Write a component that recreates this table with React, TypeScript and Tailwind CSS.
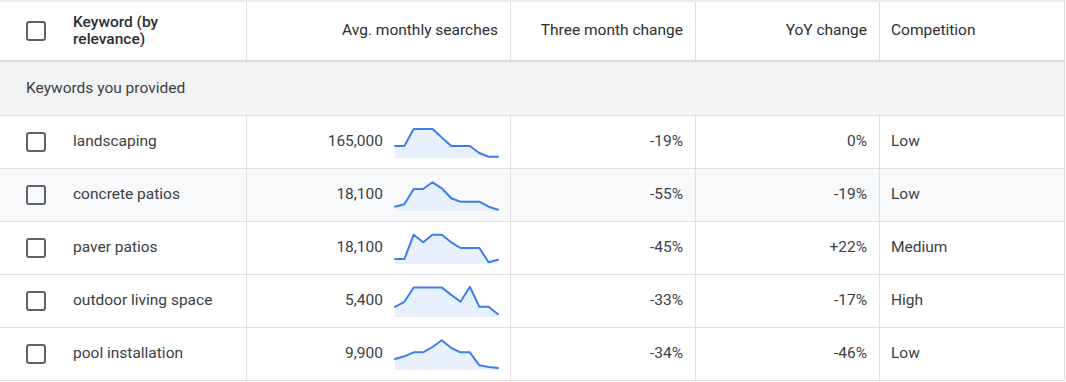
import React from 'react';

interface KeywordRow {
  keyword: string;
  searches: string;
  threeMonth: string;
  yoy: string;
  competition: string;
  trend: number[];
  shaded?: boolean;
}

const rows: KeywordRow[] = [
  { keyword: 'landscaping', searches: '165,000', threeMonth: '-19%', yoy: '0%', competition: 'Low', trend: [30, 30, 13, 13, 13, 21.5, 30, 30, 30, 37, 40.7, 40.7] },
  { keyword: 'concrete patios', searches: '18,100', threeMonth: '-55%', yoy: '-19%', competition: 'Low', trend: [37.7, 35.3, 20, 20, 13.3, 19.3, 29.3, 32.7, 32.7, 32.7, 37.7, 40.7], shaded: true },
  { keyword: 'paver patios', searches: '18,100', threeMonth: '-45%', yoy: '+22%', competition: 'Medium', trend: [37, 37, 12.7, 20.3, 12.7, 12.7, 20.3, 26, 26, 26, 40.3, 37.7] },
  { keyword: 'outdoor living space', searches: '5,400', threeMonth: '-33%', yoy: '-17%', competition: 'High', trend: [31.8, 26.8, 12.5, 12.5, 12.5, 12.5, 19.9, 26.8, 11.8, 31.8, 31.8, 39.2] },
  { keyword: 'pool installation', searches: '9,900', threeMonth: '-34%', yoy: '-46%', competition: 'Low', trend: [31, 28.3, 24.3, 24.3, 19, 12.3, 20, 24.3, 24.3, 37.3, 39, 40] },
];

const Checkbox = () => (
  <div className="w-5 h-5 shrink-0 rounded-[3px] border-2 border-[#5f6368]" />
);

const Sparkline = ({ values }: { values: number[] }) => {
  const step = 103 / (values.length - 1);
  const pts = values.map((v, i) => `${(1 + i * step).toFixed(1)},${v}`);
  const line = pts.join(' ');
  const area = `1,42 ${line} 104,42`;
  return (
    <svg width="106" height="53" viewBox="0 0 106 53" className="ml-[11px] shrink-0">
      <polygon points={area} fill="#e8f0fe" />
      <polyline points={line} fill="none" stroke="#3f7ee8" strokeWidth="2" strokeLinejoin="round" strokeLinecap="round" />
    </svg>
  );
};

export default function App() {
  return (
    <div className="w-[1066px] h-[382px] overflow-hidden bg-white text-[15.5px] text-[#3c4043]" style={{ fontFamily: 'Roboto, "Liberation Sans", sans-serif' }}>
      <div className="w-[1065px] border-r border-[#e0e0e0]">
        {/* Header */}
        <div className="flex h-[62px] border-t-2 border-b-2 border-t-[#ececec] border-b-[#dcdcdc] text-[#2d2f31]">
          <div className="w-[247px] flex items-center pl-[26px] gap-[27px] border-r border-[#e0e0e0]">
            <Checkbox />
            <div className="leading-[17px] w-[100px] font-medium">Keyword (by relevance)</div>
          </div>
          <div className="w-[264px] flex items-center justify-end pr-[12px] border-r border-[#e0e0e0]">Avg. monthly searches</div>
          <div className="w-[185px] flex items-center justify-end pr-[12px] border-r border-[#e0e0e0]">Three month change</div>
          <div className="w-[184px] flex items-center justify-end pr-[12px] border-r border-[#e0e0e0]">YoY change</div>
          <div className="flex-1 flex items-center pl-[11px]">Competition</div>
        </div>

        {/* Group row */}
        <div className="h-[54px] flex items-center pl-[26px] bg-[#f1f3f4] border-b border-[#e0e0e0]">
          Keywords you provided
        </div>

        {rows.map(r => (
          <div key={r.keyword} className={`flex h-[53px] border-b border-[#e0e0e0] ${r.shaded ? 'bg-[#f8f9fa]' : 'bg-white'}`}>
            <div className="w-[247px] flex items-center pl-[26px] gap-[27px] border-r border-[#e0e0e0]">
              <Checkbox />
              <span>{r.keyword}</span>
            </div>
            <div className="w-[264px] flex items-center justify-end pr-[10px] border-r border-[#e0e0e0]">
              <span>{r.searches}</span>
              <Sparkline values={r.trend} />
            </div>
            <div className="w-[185px] flex items-center justify-end pr-[12px] border-r border-[#e0e0e0]">{r.threeMonth}</div>
            <div className="w-[184px] flex items-center justify-end pr-[12px] border-r border-[#e0e0e0]">{r.yoy}</div>
            <div className="flex-1 flex items-center pl-[11px]">{r.competition}</div>
          </div>
        ))}
      </div>
    </div>
  );
}
